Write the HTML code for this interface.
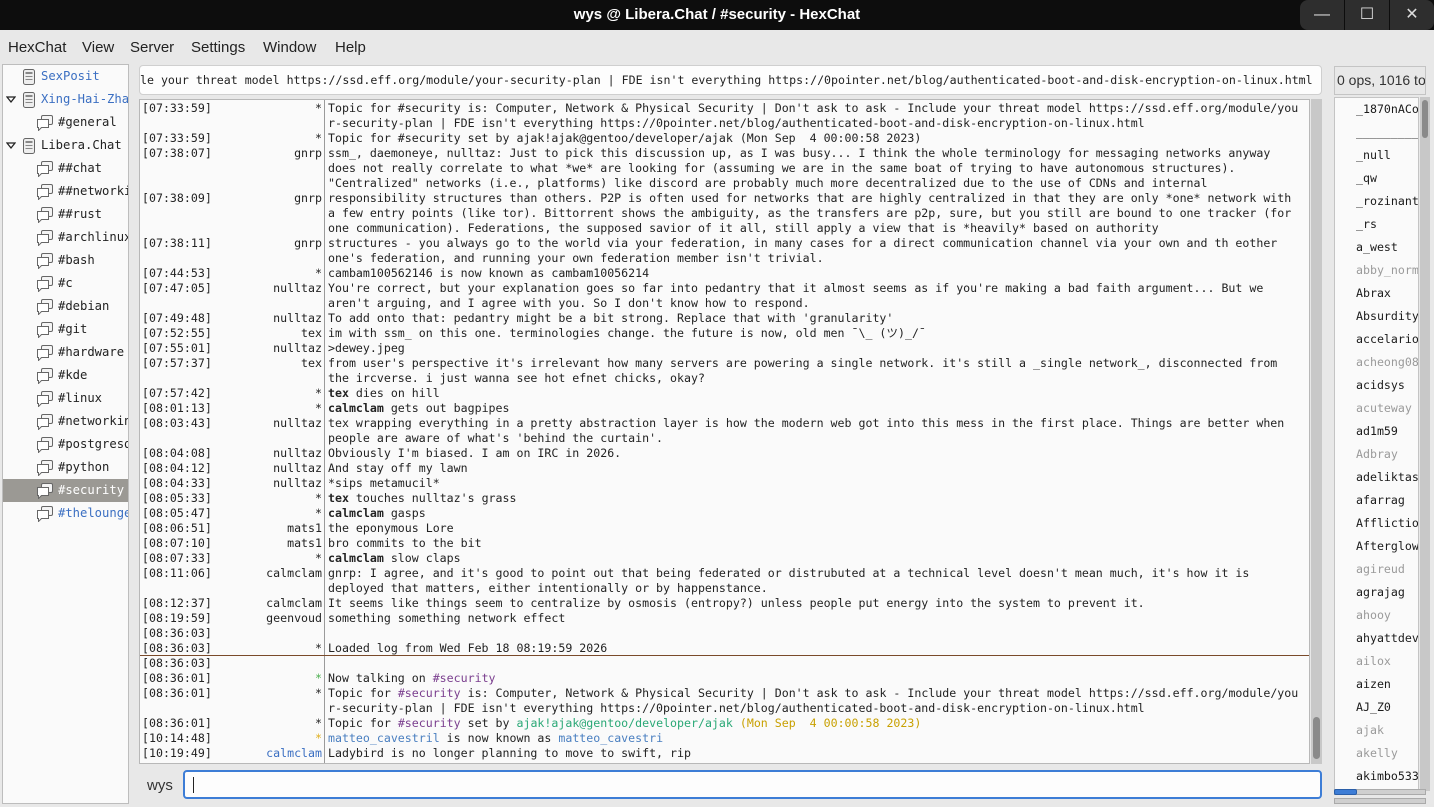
<!DOCTYPE html>
<html><head><meta charset="utf-8"><style>
*{box-sizing:border-box;margin:0;padding:0}
body{width:1434px;height:807px;overflow:hidden;background:#e8e8e8;font-family:"Liberation Sans","DejaVu Sans",sans-serif;position:relative}
.mono{font-family:"DejaVu Sans Mono","Liberation Mono",monospace;font-size:11.6px}
#title{position:absolute;left:0;top:0;width:1434px;height:30px;background:#0d0d0d;color:#fff;font-weight:bold;font-size:15px;text-align:center;line-height:30px}
.wb{position:absolute;top:0;width:44px;height:30px;background:#2e2e2e;color:#ddd;text-align:center;line-height:30px;font-size:16px}
#menu{position:absolute;top:30px;left:0;width:1434px;height:32px;font-size:15px;color:#222}
#menu span{position:absolute;top:9px}
#tree{position:absolute;left:2px;top:64px;width:127px;height:740px;background:#fafafa;border:1px solid #bdbdbd;overflow:hidden;font-size:12.2px}
.ti{position:absolute;height:23px;line-height:23px;white-space:nowrap;color:#222}
.ti svg{position:absolute;top:4px}
#topic{position:absolute;left:139px;top:65px;width:1183px;height:30px;background:#fdfdfd;border:1px solid #cfcfcf;border-radius:4px;line-height:28px;padding-left:0;overflow:hidden;white-space:nowrap;color:#222}
#chat{position:absolute;left:139px;top:99px;width:1171px;height:665px;background:#fafafa;border:1px solid #b8b8b8;overflow:hidden}
#sep{position:absolute;left:184px;top:0;width:1px;height:665px;background:#9a9a9a}
.l{position:absolute;left:0;width:1169px;height:15px;line-height:15px;white-space:pre;color:#222}
.ts{position:absolute;left:2px}
.nk{position:absolute;left:62px;width:120px;text-align:right}
.tx{position:absolute;left:188px}
b{font-weight:bold}
#vs{position:absolute;left:1311px;top:99px;width:11px;height:665px;background:#c8c8c8}
#nh{position:absolute;left:1334px;top:66px;width:92px;height:29px;border:1px solid #c4c4c4;font-size:14px;line-height:27px;padding-left:2px;white-space:nowrap;overflow:hidden;color:#333}
#nl{position:absolute;left:1334px;top:97px;width:85px;height:694px;background:#fafafa;border:1px solid #c4c4c4;overflow:hidden}
.n{position:absolute;left:21px;white-space:nowrap;color:#1a1a1a}
.g{color:#9a9a9a}
#ns{position:absolute;left:1420px;top:97px;width:10px;height:694px;background:#c8c8c8}
#in{position:absolute;left:183px;top:770px;width:1139px;height:29px;background:#fdfdfd;border:2px solid #3d7dd6;border-radius:4px}
</style></head><body>
<div id="title">wys @ Libera.Chat / #security - HexChat</div>
<div class="wb" style="left:1300px;border-radius:8px 0 0 8px">&#8212;</div>
<div class="wb" style="left:1345px">&#9744;</div>
<div class="wb" style="left:1390px;border-radius:0 8px 8px 0">&#10005;</div>
<div id="menu"><span style="left:8px">HexChat</span><span style="left:82px">View</span><span style="left:130px">Server</span><span style="left:191px">Settings</span><span style="left:263px">Window</span><span style="left:335px">Help</span></div>

<div id="tree" class="mono">
<svg width="0" height="0" style="position:absolute"><defs>
<symbol id="srv" viewBox="0 0 14 16"><rect x="1.5" y="0.5" width="11" height="15" rx="2" fill="#eee" stroke="#666"/><rect x="3.5" y="3" width="7" height="2" fill="#888"/><rect x="3.5" y="7" width="7" height="1" fill="#888"/><rect x="3.5" y="10" width="7" height="1" fill="#888"/></symbol>
<symbol id="ch" viewBox="0 0 16 16"><rect x="4.5" y="0.5" width="11" height="9" rx="1.5" fill="#f4f4f4" stroke="#666"/><path d="M0.5 4.5h11v8h-7l-3 3v-3h-1z" fill="#fff" stroke="#666"/></symbol>
<symbol id="tri" viewBox="0 0 10 8"><path d="M1 1h8l-4 5z" fill="none" stroke="#222" stroke-width="1.3"/></symbol>
</defs></svg>
<div style="position:absolute;left:0;top:414px;width:125px;height:23px;background:#9b9994"></div>
<div class="ti" style="left:19px;top:0px"><svg width="14" height="16" style="left:0"><use href="#srv"/></svg><span style="margin-left:19px;color:#3b6fc2">SexPosit</span></div>
<svg width="10" height="8" style="position:absolute;left:3px;top:31px"><use href="#tri"/></svg>
<div class="ti" style="left:19px;top:23px"><svg width="14" height="16" style="left:0"><use href="#srv"/></svg><span style="margin-left:19px;color:#3b6fc2">Xing-Hai-Zhang</span></div>
<div class="ti" style="left:34px;top:46px"><svg width="16" height="16"><use href="#ch"/></svg><span style="margin-left:21px">#general</span></div>
<svg width="10" height="8" style="position:absolute;left:3px;top:77px"><use href="#tri"/></svg>
<div class="ti" style="left:19px;top:69px"><svg width="14" height="16"><use href="#srv"/></svg><span style="margin-left:19px">Libera.Chat</span></div>
<div class="ti" style="left:34px;top:92px"><svg width="16" height="16"><use href="#ch"/></svg><span style="margin-left:21px">##chat</span></div>
<div class="ti" style="left:34px;top:115px"><svg width="16" height="16"><use href="#ch"/></svg><span style="margin-left:21px">##networking</span></div>
<div class="ti" style="left:34px;top:138px"><svg width="16" height="16"><use href="#ch"/></svg><span style="margin-left:21px">##rust</span></div>
<div class="ti" style="left:34px;top:161px"><svg width="16" height="16"><use href="#ch"/></svg><span style="margin-left:21px">#archlinux</span></div>
<div class="ti" style="left:34px;top:184px"><svg width="16" height="16"><use href="#ch"/></svg><span style="margin-left:21px">#bash</span></div>
<div class="ti" style="left:34px;top:207px"><svg width="16" height="16"><use href="#ch"/></svg><span style="margin-left:21px">#c</span></div>
<div class="ti" style="left:34px;top:230px"><svg width="16" height="16"><use href="#ch"/></svg><span style="margin-left:21px">#debian</span></div>
<div class="ti" style="left:34px;top:253px"><svg width="16" height="16"><use href="#ch"/></svg><span style="margin-left:21px">#git</span></div>
<div class="ti" style="left:34px;top:276px"><svg width="16" height="16"><use href="#ch"/></svg><span style="margin-left:21px">#hardware</span></div>
<div class="ti" style="left:34px;top:299px"><svg width="16" height="16"><use href="#ch"/></svg><span style="margin-left:21px">#kde</span></div>
<div class="ti" style="left:34px;top:322px"><svg width="16" height="16"><use href="#ch"/></svg><span style="margin-left:21px">#linux</span></div>
<div class="ti" style="left:34px;top:345px"><svg width="16" height="16"><use href="#ch"/></svg><span style="margin-left:21px">#networking</span></div>
<div class="ti" style="left:34px;top:368px"><svg width="16" height="16"><use href="#ch"/></svg><span style="margin-left:21px">#postgresql</span></div>
<div class="ti" style="left:34px;top:391px"><svg width="16" height="16"><use href="#ch"/></svg><span style="margin-left:21px">#python</span></div>
<div class="ti" style="left:34px;top:414px"><svg width="16" height="16"><use href="#ch"/></svg><span style="margin-left:21px;color:#fff">#security</span></div>
<div class="ti" style="left:34px;top:437px"><svg width="16" height="16"><use href="#ch"/></svg><span style="margin-left:21px;color:#3b6fc2">#thelounge</span></div>
</div>

<div id="topic" class="mono">le your threat model https://ssd.eff.org/module/your-security-plan | FDE isn't everything https://0pointer.net/blog/authenticated-boot-and-disk-encryption-on-linux.html</div>

<div id="chat" class="mono">
<div id="sep"></div>
<div style="position:absolute;left:0;top:555px;width:1171px;height:1px;background:#7a4a2a"></div>
<div class="l" style="top:1px"><span class="ts">[07:33:59]</span><span class="nk">*</span><span class="tx">Topic for #security is: Computer, Network &amp; Physical Security | Don't ask to ask - Include your threat model https://ssd.eff.org/module/you</span></div>
<div class="l" style="top:16px"><span class="tx">r-security-plan | FDE isn't everything https://0pointer.net/blog/authenticated-boot-and-disk-encryption-on-linux.html</span></div>
<div class="l" style="top:31px"><span class="ts">[07:33:59]</span><span class="nk">*</span><span class="tx">Topic for #security set by ajak!ajak@gentoo/developer/ajak (Mon Sep  4 00:00:58 2023)</span></div>
<div class="l" style="top:46px"><span class="ts">[07:38:07]</span><span class="nk">gnrp</span><span class="tx">ssm_, daemoneye, nulltaz: Just to pick this discussion up, as I was busy... I think the whole terminology for messaging networks anyway</span></div>
<div class="l" style="top:61px"><span class="tx">does not really correlate to what *we* are looking for (assuming we are in the same boat of trying to have autonomous structures).</span></div>
<div class="l" style="top:76px"><span class="tx">"Centralized" networks (i.e., platforms) like discord are probably much more decentralized due to the use of CDNs and internal</span></div>
<div class="l" style="top:91px"><span class="ts">[07:38:09]</span><span class="nk">gnrp</span><span class="tx">responsibility structures than others. P2P is often used for networks that are highly centralized in that they are only *one* network with</span></div>
<div class="l" style="top:106px"><span class="tx">a few entry points (like tor). Bittorrent shows the ambiguity, as the transfers are p2p, sure, but you still are bound to one tracker (for</span></div>
<div class="l" style="top:121px"><span class="tx">one communication). Federations, the supposed savior of it all, still apply a view that is *heavily* based on authority</span></div>
<div class="l" style="top:136px"><span class="ts">[07:38:11]</span><span class="nk">gnrp</span><span class="tx">structures - you always go to the world via your federation, in many cases for a direct communication channel via your own and th eother</span></div>
<div class="l" style="top:151px"><span class="tx">one's federation, and running your own federation member isn't trivial.</span></div>
<div class="l" style="top:166px"><span class="ts">[07:44:53]</span><span class="nk">*</span><span class="tx">cambam100562146 is now known as cambam10056214</span></div>
<div class="l" style="top:181px"><span class="ts">[07:47:05]</span><span class="nk">nulltaz</span><span class="tx">You're correct, but your explanation goes so far into pedantry that it almost seems as if you're making a bad faith argument... But we</span></div>
<div class="l" style="top:196px"><span class="tx">aren't arguing, and I agree with you. So I don't know how to respond.</span></div>
<div class="l" style="top:211px"><span class="ts">[07:49:48]</span><span class="nk">nulltaz</span><span class="tx">To add onto that: pedantry might be a bit strong. Replace that with 'granularity'</span></div>
<div class="l" style="top:226px"><span class="ts">[07:52:55]</span><span class="nk">tex</span><span class="tx">im with ssm_ on this one. terminologies change. the future is now, old men ¯\_ (ツ)_/¯</span></div>
<div class="l" style="top:241px"><span class="ts">[07:55:01]</span><span class="nk">nulltaz</span><span class="tx">&gt;dewey.jpeg</span></div>
<div class="l" style="top:256px"><span class="ts">[07:57:37]</span><span class="nk">tex</span><span class="tx">from user's perspective it's irrelevant how many servers are powering a single network. it's still a _single network_, disconnected from</span></div>
<div class="l" style="top:271px"><span class="tx">the ircverse. i just wanna see hot efnet chicks, okay?</span></div>
<div class="l" style="top:286px"><span class="ts">[07:57:42]</span><span class="nk">*</span><span class="tx"><b>tex</b> dies on hill</span></div>
<div class="l" style="top:301px"><span class="ts">[08:01:13]</span><span class="nk">*</span><span class="tx"><b>calmclam</b> gets out bagpipes</span></div>
<div class="l" style="top:316px"><span class="ts">[08:03:43]</span><span class="nk">nulltaz</span><span class="tx">tex wrapping everything in a pretty abstraction layer is how the modern web got into this mess in the first place. Things are better when</span></div>
<div class="l" style="top:331px"><span class="tx">people are aware of what's 'behind the curtain'.</span></div>
<div class="l" style="top:346px"><span class="ts">[08:04:08]</span><span class="nk">nulltaz</span><span class="tx">Obviously I'm biased. I am on IRC in 2026.</span></div>
<div class="l" style="top:361px"><span class="ts">[08:04:12]</span><span class="nk">nulltaz</span><span class="tx">And stay off my lawn</span></div>
<div class="l" style="top:376px"><span class="ts">[08:04:33]</span><span class="nk">nulltaz</span><span class="tx">*sips metamucil*</span></div>
<div class="l" style="top:391px"><span class="ts">[08:05:33]</span><span class="nk">*</span><span class="tx"><b>tex</b> touches nulltaz's grass</span></div>
<div class="l" style="top:406px"><span class="ts">[08:05:47]</span><span class="nk">*</span><span class="tx"><b>calmclam</b> gasps</span></div>
<div class="l" style="top:421px"><span class="ts">[08:06:51]</span><span class="nk">mats1</span><span class="tx">the eponymous Lore</span></div>
<div class="l" style="top:436px"><span class="ts">[08:07:10]</span><span class="nk">mats1</span><span class="tx">bro commits to the bit</span></div>
<div class="l" style="top:451px"><span class="ts">[08:07:33]</span><span class="nk">*</span><span class="tx"><b>calmclam</b> slow claps</span></div>
<div class="l" style="top:466px"><span class="ts">[08:11:06]</span><span class="nk">calmclam</span><span class="tx">gnrp: I agree, and it's good to point out that being federated or distrubuted at a technical level doesn't mean much, it's how it is</span></div>
<div class="l" style="top:481px"><span class="tx">deployed that matters, either intentionally or by happenstance.</span></div>
<div class="l" style="top:496px"><span class="ts">[08:12:37]</span><span class="nk">calmclam</span><span class="tx">It seems like things seem to centralize by osmosis (entropy?) unless people put energy into the system to prevent it.</span></div>
<div class="l" style="top:511px"><span class="ts">[08:19:59]</span><span class="nk">geenvoud</span><span class="tx">something something network effect</span></div>
<div class="l" style="top:526px"><span class="ts">[08:36:03]</span></div>
<div class="l" style="top:541px"><span class="ts">[08:36:03]</span><span class="nk">*</span><span class="tx">Loaded log from Wed Feb 18 08:19:59 2026</span></div>
<div class="l" style="top:556px"><span class="ts">[08:36:03]</span></div>
<div class="l" style="top:571px"><span class="ts">[08:36:01]</span><span class="nk" style="color:#4caf50">*</span><span class="tx">Now talking on <span style="color:#7a3e8e">#security</span></span></div>
<div class="l" style="top:586px"><span class="ts">[08:36:01]</span><span class="nk">*</span><span class="tx">Topic for <span style="color:#7a3e8e">#security</span> is: Computer, Network &amp; Physical Security | Don't ask to ask - Include your threat model https://ssd.eff.org/module/you</span></div>
<div class="l" style="top:601px"><span class="tx">r-security-plan | FDE isn't everything https://0pointer.net/blog/authenticated-boot-and-disk-encryption-on-linux.html</span></div>
<div class="l" style="top:616px"><span class="ts">[08:36:01]</span><span class="nk">*</span><span class="tx">Topic for <span style="color:#7a3e8e">#security</span> set by <span style="color:#2aa876">ajak!ajak@gentoo/developer/ajak</span> <span style="color:#c8a000">(Mon Sep  4 00:00:58 2023)</span></span></div>
<div class="l" style="top:631px"><span class="ts">[10:14:48]</span><span class="nk" style="color:#e0b020">*</span><span class="tx"><span style="color:#4a7fc0">matteo_cavestril</span> is now known as <span style="color:#4a7fc0">matteo_cavestri</span></span></div>
<div class="l" style="top:646px"><span class="ts">[10:19:49]</span><span class="nk" style="color:#3b6fc2">calmclam</span><span class="tx">Ladybird is no longer planning to move to swift, rip</span></div>
</div>
<div id="vs"><div style="position:absolute;left:2px;top:618px;width:7px;height:42px;background:#8a8a8a;border-radius:4px"></div></div>

<div id="nh">0 ops, 1016 total</div>
<div id="nl" class="mono">
<div class="n" style="top:4px">_1870nACom</div>
<div class="n" style="top:27px">____________</div>
<div class="n" style="top:50px">_null</div>
<div class="n" style="top:73px">_qw</div>
<div class="n" style="top:96px">_rozinante</div>
<div class="n" style="top:119px">_rs</div>
<div class="n" style="top:142px">a_west</div>
<div class="n g" style="top:165px">abby_norm</div>
<div class="n" style="top:188px">Abrax</div>
<div class="n" style="top:211px">Absurdity</div>
<div class="n" style="top:234px">accelario</div>
<div class="n g" style="top:257px">acheong08</div>
<div class="n" style="top:280px">acidsys</div>
<div class="n g" style="top:303px">acuteway</div>
<div class="n" style="top:326px">ad1m59</div>
<div class="n g" style="top:349px">Adbray</div>
<div class="n" style="top:372px">adeliktas</div>
<div class="n" style="top:395px">afarrag</div>
<div class="n" style="top:418px">Affliction</div>
<div class="n" style="top:441px">Afterglow</div>
<div class="n g" style="top:464px">agireud</div>
<div class="n" style="top:487px">agrajag</div>
<div class="n g" style="top:510px">ahooy</div>
<div class="n" style="top:533px">ahyattdev</div>
<div class="n g" style="top:556px">ailox</div>
<div class="n" style="top:579px">aizen</div>
<div class="n" style="top:602px">AJ_Z0</div>
<div class="n g" style="top:625px">ajak</div>
<div class="n g" style="top:648px">akelly</div>
<div class="n" style="top:671px">akimbo533</div>
</div>
<div id="ns"><div style="position:absolute;left:2px;top:3px;width:6px;height:38px;background:#8a8a8a;border-radius:3px"></div></div>
<div style="position:absolute;left:1334px;top:789px;width:92px;height:6px;background:#cfcfcf;border:1px solid #aaa"></div>
<div style="position:absolute;left:1334px;top:789px;width:23px;height:6px;background:#3d7dd6;border:1px solid #2a5ea8;border-radius:2px"></div>
<div style="position:absolute;left:1334px;top:798px;width:92px;height:6px;background:#cfcfcf;border:1px solid #aaa"></div>

<div style="position:absolute;left:147px;top:777px;font-size:15px;color:#333">wys</div>
<div id="in"><div style="position:absolute;left:8px;top:5px;width:1px;height:16px;background:#222"></div></div>
</body></html>
